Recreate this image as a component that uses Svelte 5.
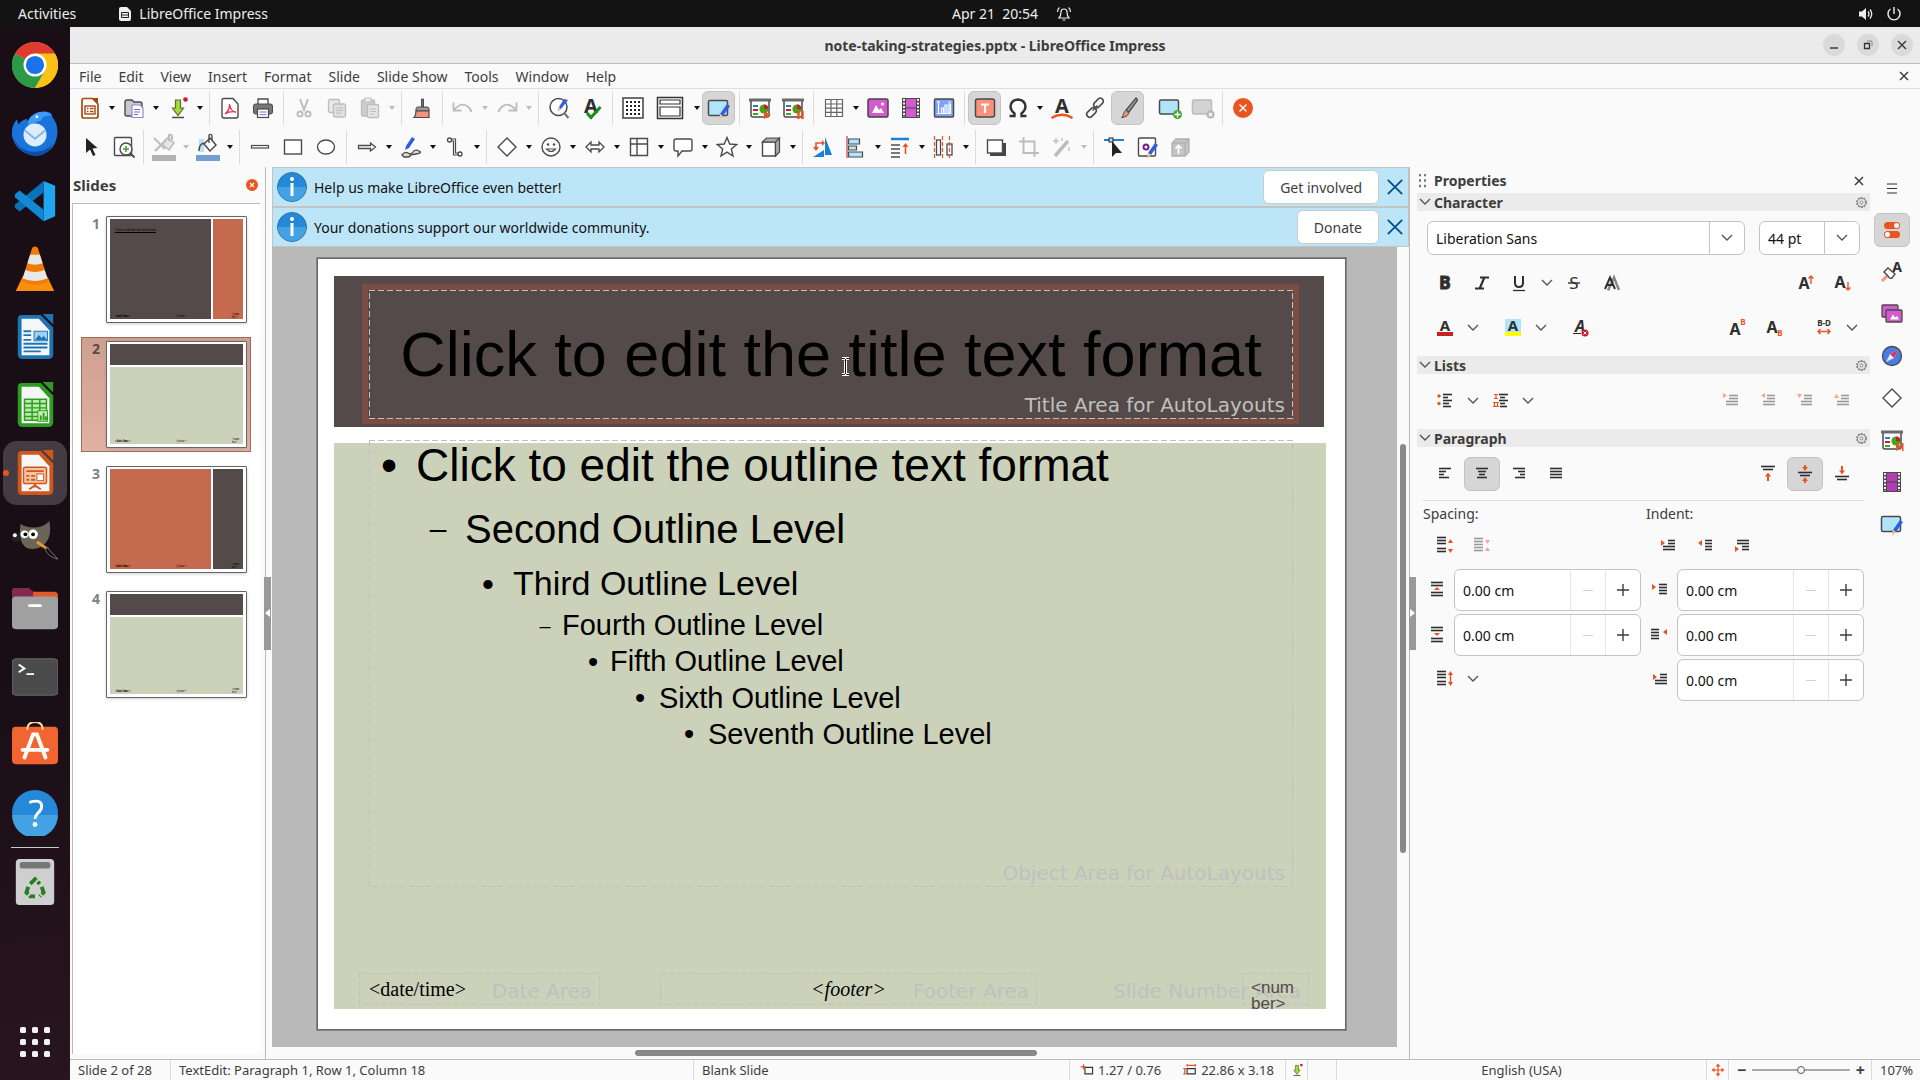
<script>
    const g = '#4a4a4a';
    const o = '#e95420';
    const off = '#bdbdbd';

    function lines(rows, color = '#2e2e2e') {
        return rows.map(([x, y, w]) => `<path d="M${x} ${y}.5h${w}" stroke="${color}" stroke-width="1.6" fill="none"/>`).join('');
    }

    function letter(ch, x, y, size, extra = '') {
        return `<text x="${x}" y="${y}" font-family="Noto Sans" font-weight="700" font-size="${size}" text-anchor="middle" fill="#2e2e2e" ${extra}>${ch}</text>`;
    }

    const screen = `<path d="M3 5v14q0 2 2 2h14q2 0 2-2V5" fill="#fff" stroke="${g}" stroke-width="1.5"/><path d="M1 4h22" stroke="#6b6b6b" stroke-width="3"/><path d="M5 10h5" stroke="#1b7fd4" stroke-width="2"/><path d="M5 14h5" stroke="#d2172f" stroke-width="2"/><path d="M5 18h5" stroke="#43a616" stroke-width="2"/><circle cx="16" cy="13" r="4.6" fill="#43a616"/><path d="M16 13V8.400a4.600 4.600 0 0 1 4.600 4.600z" fill="#d2172f"/>`;
    const film = (c) => `<rect x="3" y="2" width="18" height="20" fill="#4a4a4a"/><rect x="7" y="3" width="10" height="8.500" fill="${c}"/><rect x="7" y="12.500" width="10" height="8.500" fill="${c}"/><path d="M5 3v18M19 3v18" stroke="#fff" stroke-width="1.800" stroke-dasharray="2 1.500"/>`;
    const pencil = '<path d="M20 8l3 2-7 10-3-2z" fill="#2e5fe0"/><path d="M13 18l3 2-4 4z" fill="#f6c083"/>';
    const download = '<path d="M9.500 4h5v8h3L12 19.500 6.500 12h3z" fill="#a6d840" stroke="#56702a" stroke-width="1.200"/><path d="M6 21.500h12" stroke="#4a4a4a" stroke-width="1.500"/><circle cx="19.500" cy="3.500" r="2.300" fill="#d2172f"/>';
    const brushA = '<path d="M20 2q2 1 1 3l-8 11-3-2z" fill="#9a9a9a" stroke="#4a4a4a" stroke-width="1.300"/><path d="M9.500 14.500q3 0 3 3-1 3.500-7 4 2-1 2-4 .5-2 2-3z" fill="#f58f7a" stroke="#4a4a4a"/>';
    const master = '<rect x="1.500" y="4.500" width="19" height="15" rx="1.500" fill="#b0e4f8" stroke="#4a4a4a" stroke-width="1.500"/>' + pencil;

    const icons = {
        newdoc: `<path d="M6 2.500h8.500L20 8v12q0 2-2 2H6q-2 0-2-2V4.500q0-2 2-2z" fill="#fff" stroke="#a5480f" stroke-width="1.700"/><path d="M14 2h6v6z" fill="#a5480f"/><rect x="7" y="10" width="10" height="8" fill="none" stroke="#a5480f" stroke-width="1.400"/><path d="M9 12.500h1.500M12 12.500h3.500M9 15.500h1.500M12 15.500h3.500" stroke="#a5480f" stroke-width="1.400"/>`,
        open: `<path d="M3 19V6q0-2 2-2h5l2 2h6q2 0 2 2v12H5q-2 0-2-2z" fill="#c9c9c9" stroke="${g}" stroke-width="1.400"/><path d="M10 9h8l3 3v9.500H10z" fill="#fff" stroke="#8d8dd8" stroke-width="1.200"/><path d="M12 13.500h6M12 16h6M12 18.500h4" stroke="#6e6ed8"/>`,
        save: download,
        pdf: `<path d="M6 2.500h9L20 8v12q0 2-2 2H6q-2 0-2-2V4.500q0-2 2-2z" fill="#fff" stroke="${g}" stroke-width="1.400"/><path d="M7 18q5-4 4.500-10c1 6 3 8 6.500 8-5-1-8 0-11 2z" fill="none" stroke="#e2304a" stroke-width="1.300"/>`,
        print: `<path d="M7 8V3h10v5" fill="#fff" stroke="${g}" stroke-width="1.300"/><rect x="2.500" y="8" width="19" height="10" rx="2" fill="#777" stroke="${g}"/><rect x="6.500" y="13" width="11" height="8.500" fill="#fff" stroke="${g}" stroke-width="1.200"/><path d="M8.500 16h7M8.500 18.700h7" stroke="#6e6ed8"/>`,
        cut: `<path d="M8 3l4.500 12M16 3l-4.500 12" stroke="${off}" stroke-width="2" fill="none"/><circle cx="8" cy="18" r="2.500" fill="none" stroke="${off}" stroke-width="2"/><circle cx="16" cy="18" r="2.500" fill="none" stroke="${off}" stroke-width="2"/>`,
        copy: `<rect x="3.500" y="3.500" width="11" height="13" rx="1.500" fill="#e8e8e8" stroke="${off}" stroke-width="1.300"/><rect x="8.500" y="8" width="12" height="13" rx="1.500" fill="#e0e0e0" stroke="${off}" stroke-width="1.300"/><path d="M11 12h7M11 14.500h7M11 17h5" stroke="${off}"/>`,
        paste: `<rect x="3.500" y="4" width="13" height="16" rx="1.500" fill="#ccc" stroke="${off}" stroke-width="1.300"/><rect x="7" y="2" width="6" height="4" fill="#eee" stroke="${off}"/><rect x="9.500" y="8.500" width="11" height="13" rx="1" fill="#e6e6e6" stroke="${off}" stroke-width="1.300"/><path d="M12 13h6M12 15.500h6M12 18h4" stroke="${off}"/>`,
        clone: `<path d="M11.500 3h2v8h-2z" fill="#777" stroke="${g}"/><path d="M6 15v-2q0-2 2-2h9q2 0 2 2v2z" fill="#999" stroke="${g}"/><path d="M6 15h13v6.500H4q2-2 2-6.500z" fill="#f9917c" stroke="${g}" stroke-width="1.200"/>`,
        undo: `<path d="M2.500 6.500v8h8M3 14q7-8 13-4 4 3 4.500 6" fill="none" stroke="${off}" stroke-width="1.800"/>`,
        redo: `<path d="M21.500 6.500v8h-8M21 14q-7-8-13-4-4 3-4.500 6" fill="none" stroke="${off}" stroke-width="1.800"/>`,
        find: `<circle cx="11.500" cy="11" r="8.500" fill="#fff" stroke="${g}" stroke-width="1.500"/><path d="M17 17l4.500 5" stroke="#777" stroke-width="2.200"/><path d="M17 3l4 1-7 9-3 2 1-4z" fill="#2e5fe0"/><path d="M12 11l2 2-3 2.500z" fill="#f6c083"/>`,
        spell: letter('A', 11, 17, 20) + '<path d="M7 17l4 4.500L20.500 11" fill="none" stroke="#168c1c" stroke-width="3"/>',
        grid: '<rect x="2" y="2" width="20" height="20" fill="#fff" stroke="#333" stroke-width="1.400"/>' + [6, 10, 14, 18].map((y) => `<path d="M5 ${y}h15" stroke="#222" stroke-width="1.800" stroke-dasharray="2 2"/>`).join(''),
        views: `<path d="M-.500 1.500h25v21h-25z" fill="#fff" stroke="#333" stroke-width="1.500"/><path d="M2 4h20v4H2zM2 11h20v9H2z" fill="#fff" stroke="#333" stroke-width="1.200"/>`,
        master,
        showfirst: screen + `<path d="M16 15l7 4-7 4z" fill="${o}"/>`,
        showcur: screen + `<path d="M17.500 15v8M21.500 15v8" stroke="${o}" stroke-width="2.400"/>`,
        table: `<path d="M3.500 3.500h17v17h-17zM3.500 8h17M3.500 12.200h17M3.500 16.400h17M9 3.500v17M14.800 3.500v17" fill="#fff" stroke="#666" stroke-width="1.200"/>`,
        image: '<rect x="2" y="3" width="20" height="18" rx="1.500" fill="#d45bcf" stroke="#444" stroke-width="1.500"/><path d="M6 17l4-8 3 5 2-2 3 5z" fill="#fff"/><circle cx="16.500" cy="8" r="1.500" fill="#fff"/>',
        av: film('#d45bcf'),
        chart: '<rect x="2.500" y="3" width="19" height="18" rx="1" fill="#7da4f8" stroke="#4a4a4a" stroke-width="1.500"/><path d="M5 6h3M6.500 5v13M5 17.500h14M16 6h3M9.500 17v-5h2v5M13 17v-8h2v8M17 17V8h1.500v9" fill="none" stroke="#fff" stroke-width="1.200"/>',
        textbox: '<rect x="2.500" y="3" width="19" height="18" rx="2" fill="#f9917c" stroke="#4a4a4a" stroke-width="1.500"/><path d="M8 8.500h8M12 8.500V17" stroke="#fff" stroke-width="2.200" fill="none"/>',
        omega: '<path d="M3.500 20h5v-2.500Q4.500 14 4.500 10.500 5 4 12 3.500q7 .5 7.500 7 0 3.500-4 7V20h5" fill="none" stroke="#333" stroke-width="2.400"/>',
        fontwork: letter('A', 12, 17, 20) + `<path d="M1.500 22q10.500-6.500 21 0" fill="none" stroke="${o}" stroke-width="2.400"/>`,
        link: `<rect x="10" y="4" width="11" height="6" rx="3" transform="rotate(-45 15.500 7)" fill="none" stroke="${g}" stroke-width="1.500"/><rect x="3" y="13.500" width="11" height="6" rx="3" transform="rotate(-45 8.500 16.500)" fill="none" stroke="${g}" stroke-width="1.500"/><path d="M9.500 14.500l5-5" stroke="${g}" stroke-width="1.500"/>`,
        brush: brushA,
        newslide: '<rect x="2.500" y="4" width="19" height="14" rx="1.500" fill="#b0e4f8" stroke="#4a4a4a" stroke-width="1.500"/><circle cx="20.500" cy="18.500" r="4.500" fill="#43a62b"/><path d="M20.500 15.500v6M17.500 18.500h6" stroke="#fff" stroke-width="1.400"/>',
        delslide: '<rect x="2.500" y="4" width="19" height="14" rx="1.500" fill="#d3d3d3" stroke="#bbb" stroke-width="1.500"/><circle cx="20.500" cy="18.500" r="4" fill="#b5b5b5"/><path d="M19 17l3 3M22 17l-3 3" stroke="#fff" stroke-width="1.200"/>',
        closedoc: `<circle cx="12" cy="12" r="10" fill="${o}"/><path d="M8.500 8.500l7 7M15.500 8.500l-7 7" stroke="#fff" stroke-width="1.400"/>`,
        pointer: '<path d="M8 3v15l4-3.500 3 6.500 2.500-1-3-6.500 5-.5z" fill="#222"/>',
        zoom: `<rect x="3.500" y="2.500" width="17" height="18" rx="1" fill="#fff" stroke="${g}" stroke-width="1.400"/><circle cx="15" cy="14" r="6" fill="#fff" stroke="${g}" stroke-width="1.400"/><path d="M19.500 18.500l4 4" stroke="${g}" stroke-width="2"/><path d="M15 11v6M12 14h6" stroke="#43a62b" stroke-width="1.600"/>`,
        linecolor: `<path d="M2 3l11 11" stroke="${off}" stroke-width="2"/><path d="M10 9l5-6 7 5-5 7z" fill="#e6e6e6" stroke="${off}" stroke-width="1.500"/><path d="M17 6V0q3-1 3 2v3M3 16L14 5" stroke="${off}" stroke-width="2.200" fill="none"/><path d="M0 23h24" stroke="#b3b3b3" stroke-width="6"/>`,
        fillcolor: `<path d="M3 4h5v13H3z" fill="#b0e4f8"/><path d="M8 9l6-6 6 7-6 6z" fill="#fff" stroke="${g}" stroke-width="1.500"/><path d="M13 8V0q3-2 3 2v3M3 16q0-7 5-8" stroke="${g}" stroke-width="1.400" fill="none"/><path d="M0 23h24" stroke="#729fcf" stroke-width="6"/>`,
        line: `<rect x="3.500" y="10.500" width="17" height="2.500" fill="#fff" stroke="${g}" stroke-width="1.200"/>`,
        rect: `<rect x="3.500" y="5" width="17" height="14" fill="#fff" stroke="${g}" stroke-width="1.400"/>`,
        ellipse: `<ellipse cx="12" cy="12" rx="8.500" ry="7" fill="#fff" stroke="${g}" stroke-width="1.400"/>`,
        arrow: `<path d="M3.500 10.500h12V8l5 4-5 4v-2.500h-12z" fill="#fff" stroke="${g}" stroke-width="1.300"/>`,
        curve: `<path d="M13 2l3 2-6 9-4 2 1-4z" fill="#2e5fe0"/><path d="M3 20q3-4 6-2t5-1 6-1-3 3-6 2-6 1z" fill="#ddd" stroke="${g}" stroke-width="1.300"/>`,
        connector: `<circle cx="6.500" cy="5" r="2" fill="#fff" stroke="${g}" stroke-width="1.300"/><circle cx="17" cy="19" r="2" fill="#fff" stroke="${g}" stroke-width="1.300"/><path d="M8.500 4h4v14H15M8.500 6h2v14H15" fill="none" stroke="${g}" stroke-width="1.200"/>`,
        diamond: `<path d="M12 3l9 9-9 9-9-9z" fill="#fff" stroke="${g}" stroke-width="1.400"/>`,
        smiley: `<circle cx="12" cy="12" r="9" fill="#fff" stroke="${g}" stroke-width="1.400"/><circle cx="9" cy="9.500" r="1.200" fill="${g}"/><circle cx="15" cy="9.500" r="1.200" fill="${g}"/><path d="M7.500 14q4.500 5 9 0z" fill="#fff" stroke="${g}" stroke-width="1.200"/>`,
        arrows: `<path d="M3 12l5-5v3h8V7l5 5-5 5v-3H8v3z" fill="#fff" stroke="${g}" stroke-width="1.300"/>`,
        flow: `<path d="M3.500 3.500h17v17h-17zM3.500 9h17M10 3.500v17" fill="#fff" stroke="${g}" stroke-width="1.400"/>`,
        callout: `<path d="M5 4h14q2 0 2 2v8q0 2-2 2h-8l-4 5v-5H5q-2 0-2-2V6q0-2 2-2z" fill="#fff" stroke="${g}" stroke-width="1.400"/>`,
        star: `<path d="M12 2.500l2.700 6.500 7 .5-5.400 4.500 1.700 7-6-3.800-6 3.800 1.700-7L2.300 9.500l7-.5z" fill="#fff" stroke="${g}" stroke-width="1.400"/>`,
        cube: `<path d="M3.500 7h13v14h-13z" fill="#fff" stroke="${g}" stroke-width="1.400"/><path d="M3.500 7l4-4h13l-4 4zM16.500 7l4-4v14l-4 4z" fill="#aaa" stroke="${g}" stroke-width="1.200"/>`,
        rotate: `<path d="M14 2l7 18h-7zM2 22l11-7v7z" fill="#1b7fd4"/><path d="M5 15V8h7" fill="none" stroke="${o}" stroke-width="1.600"/><path d="M11 5l3 3-3 3M2 12l3 4 3-4z" fill="${o}"/>`,
        align: `<path d="M3 1v22" stroke="#d2172f"/><path d="M4.500 4h11v5h-11zM4.500 11h8v4h-8zM4.500 17h14v5h-14z" fill="#b0e4f8" stroke="${g}" stroke-width="1.200"/>`,
        arrange: `<path d="M3 4h18" stroke="#1b7fd4" stroke-width="2.500"/><path d="M3 10h9M3 14h9M3 18h9M3 22h9" stroke="#777" stroke-width="2"/><path d="M17.500 19v-9" stroke="${o}" stroke-width="1.600"/><path d="M14.500 12l3-4 3 4z" fill="${o}"/>`,
        distribute: `<rect x="4.500" y="5" width="4" height="15" fill="#fff" stroke="${g}" stroke-width="1.300"/><rect x="15" y="9" width="5" height="11" fill="#fff" stroke="${g}" stroke-width="1.300"/><path d="M2.500 1v22M10.500 1v22M17.500 1v22" stroke="${o}" stroke-width="1.200" stroke-dasharray="4 2"/>`,
        shadow: `<path d="M6 8h16v13H6z" fill="#444"/><rect x="3.500" y="5" width="15" height="13" fill="#fff" stroke="${g}" stroke-width="1.400"/>`,
        crop: `<path d="M6.500 2v16H22M2 6.500h15.500V22" fill="none" stroke="${off}" stroke-width="2"/>`,
        filter: `<path d="M5 21L18 6" stroke="${off}" stroke-width="3.500"/><path d="M6 3v6M3 6h6M12 3v3M19 12v4" stroke="${off}" stroke-width="1.300"/>`,
        points: '<path d="M2 5h20" stroke="#1b7fd4" stroke-width="2"/><rect x="7" y="3" width="4" height="4" fill="#b0e4f8" stroke="#222"/><path d="M10 6v16l4-4h6z" fill="#222"/>',
        glue: `<rect x="3.500" y="3" width="17" height="18" rx="1" fill="#fff" stroke="${g}" stroke-width="1.400"/><circle cx="11" cy="12" r="2.500" fill="none" stroke="#7b1e8c" stroke-width="2"/>` + pencil,
        extrude: `<path d="M4 8l4-4h13v13l-4 4H4z" fill="#c4c4c4" stroke="#b0b0b0" stroke-width="1.300"/><path d="M4 8h13v13M17 8l4-4" stroke="#aaa" fill="none"/><path d="M10.500 19v-8M7.500 13.500l3-3 3 3" stroke="#fff" stroke-width="1.700" fill="none"/>`,
        bold: letter('B', 12, 18, 17, 'stroke="#2e2e2e" stroke-width="1"'),
        italic: '<path d="M10 6.500h9M5 17.500h9M14.500 6l-5 12" stroke="#2e2e2e" stroke-width="2.200" fill="none"/>',
        underline: '<path d="M8 5v7q0 4 4 4t4-4V5" fill="none" stroke="#2e2e2e" stroke-width="2"/><path d="M6 19.500h12" stroke="#2e2e2e" stroke-width="1.300"/>',
        strike: `<text x="12" y="18" font-family="Noto Sans" font-size="17" text-anchor="middle" fill="#2e2e2e">S</text><path d="M6 12h12" stroke="#2e2e2e" stroke-width="1.400"/>`,
        shadowA: '<path d="M9 19.500l6-13 5 12.500" stroke="#888" stroke-width="2.500" fill="none"/>' + '<path d="M6 18l5-11.500L16 18M8 14h6" fill="none" stroke="#2e2e2e" stroke-width="2"/>',
        grow: letter('A', 11, 18, 16) + `<path d="M18 13V5M15.500 7.500L18 5l2.500 2.500" stroke="${o}" stroke-width="1.400" fill="none"/>`,
        shrink: letter('A', 10, 17, 16) + `<path d="M18 11v8M15.500 16.500L18 19l2.500-2.500" stroke="${o}" stroke-width="1.400" fill="none"/>`,
        fontcolor: letter('A', 12, 15, 15) + '<path d="M4 18h16" stroke="#c9211e" stroke-width="4"/>',
        highlight: '<rect x="4" y="3" width="16" height="14" fill="#b0e4f8"/>' + letter('A', 12, 15, 15) + '<path d="M4 18h16" stroke="#ff0" stroke-width="4"/>',
        clear: letter('A', 11, 16, 16, 'font-style="italic"') + '<path d="M4 17.500h8" stroke="#2e2e2e"/><circle cx="16" cy="17" r="3.500" fill="#d2172f"/><path d="M14.500 15.500l3 3M17.500 15.500l-3 3" stroke="#fff"/>',
        sup: letter('A', 10, 19, 16) + `<text x="18" y="9" font-family="Noto Sans" font-weight="700" font-size="8" text-anchor="middle" fill="${o}">B</text>`,
        sub: letter('A', 10, 17, 16) + `<text x="18" y="20" font-family="Noto Sans" font-weight="700" font-size="8" text-anchor="middle" fill="${o}">B</text>`,
        spacing: letter('B-D', 12, 10, 8) + `<path d="M6 15.500h12M8.500 13L6 15.500 8.500 18M15.500 13l2.500 2.500-2.500 2.500" stroke="${o}" stroke-width="1.400" fill="none"/>`,
        bullets: `<circle cx="6" cy="7" r="1.700" fill="${o}"/><circle cx="6" cy="14.500" r="1.700" fill="${o}"/>` + lines([[10, 5, 9], [10, 8, 5], [10, 11, 9], [10, 14, 6], [10, 17, 8]]),
        numbers: `<path d="M6 5.500h4M8 5.500v4M6 9.500h4M5 13.500h6M6.500 13.500v4M9.500 13.500v4M5 17.500h6" stroke="${o}" stroke-width="1.200"/>` + lines([[11, 5, 9], [12, 8, 5], [11, 11, 9], [12, 14, 5], [12, 17, 7]]),
        demote: `<path d="M4 4l4 2.500L4 9z" fill="#f4a78f"/>` + lines([[10, 6, 9], [10, 9, 9], [7, 12, 12], [7, 15, 12]], '#999'),
        promote: `<path d="M9 4L5 6.500 9 9z" fill="#f4a78f"/>` + lines([[11, 6, 8], [11, 9, 8], [7, 12, 12], [7, 15, 12]], '#999'),
        movedown: `<path d="M4 5h5L6.500 9z" fill="#f4a78f"/>` + lines([[11, 6, 8], [11, 9, 8], [8, 12, 11], [8, 15, 11]], '#999'),
        moveup: `<path d="M4 9h5L6.500 5z" fill="#f4a78f"/>` + lines([[11, 6, 8], [11, 9, 8], [7, 12, 12], [7, 15, 12]], '#999'),
        left: lines([[6, 6, 12], [6, 9, 7], [6, 12, 5], [6, 15, 10]]),
        center: lines([[6, 6, 12], [8, 9, 8], [9, 12, 6], [7, 15, 10]]),
        right: lines([[6, 6, 12], [11, 9, 7], [13, 12, 5], [8, 15, 10]]),
        justify: lines([[6, 6, 12], [6, 9, 12], [6, 12, 12], [6, 15, 12]]),
        top: lines([[5, 4, 14], [7, 7, 10]]) + `<path d="M12 19v-6" stroke="${o}" stroke-width="2"/><path d="M9 14.500l3-4 3 4z" fill="${o}"/>`,
        middle: lines([[5, 10, 14], [7, 13, 10]]) + `<path d="M12 3v3M12 18v3" stroke="${o}" stroke-width="2"/><path d="M9 5l3 4 3-4zM9 19l3-4 3 4z" fill="${o}"/>`,
        bottom: lines([[5, 14, 14], [7, 17, 10]]) + `<path d="M12 4v6" stroke="${o}" stroke-width="2"/><path d="M9 8.500l3 4 3-4z" fill="${o}"/>`,
        spcup: lines([[4, 3, 9], [4, 6, 9], [4, 9, 9], [4, 14, 9], [4, 17, 9]]) + `<path d="M15 9h5l-2.500-4zM15 15h5l-2.500 4z" fill="${o}"/>`,
        spcdown: lines([[4, 4, 9], [4, 7, 9], [4, 10, 9], [4, 13, 9], [4, 16, 9]], '#999') + '<path d="M15 6h5l-2.500 4zM15 17h5l-2.500-4z" fill="#f4a78f"/>',
        indmore: lines([[12, 6, 7], [12, 9, 7], [7, 12, 12], [7, 15, 12]]) + `<path d="M5 6l4 3-4 3z" fill="${o}"/>`,
        indless: lines([[12, 6, 7], [12, 9, 7], [12, 12, 7], [12, 15, 7]]) + `<path d="M9 6L5 9l4 3z" fill="${o}"/>`,
        indhang: lines([[7, 6, 12], [7, 9, 12], [12, 12, 7], [12, 15, 7]]) + `<path d="M5 12l4 3-4 3z" fill="${o}"/>`,
        above: lines([[6, 4, 12], [6, 7, 12], [6, 14, 12], [6, 17, 12]]) + `<path d="M9 12h6l-3-3z" fill="${o}"/>`,
        below: lines([[6, 4, 12], [6, 7, 12], [6, 15, 12], [6, 18, 12]]) + `<path d="M9 10h6l-3 3z" fill="${o}"/>`,
        before: lines([[11, 6, 8], [11, 9, 8], [11, 12, 8], [11, 15, 8]]) + `<path d="M4 6l4 3-4 3z" fill="${o}"/>`,
        after: lines([[3, 6, 8], [3, 9, 8], [3, 12, 8], [3, 15, 8]]) + `<path d="M19 6l-4 3 4 3z" fill="${o}"/>`,
        linespc: lines([[4, 4, 9], [4, 7, 9], [4, 10, 9], [4, 14, 9], [4, 17, 9]]) + `<path d="M17.500 6v11" stroke="${o}" stroke-width="1.500"/><path d="M15 8h5l-2.500-4zM15 15h5l-2.500 4z" fill="${o}"/>`,
        gear: '<circle cx="12" cy="12" r="9" fill="none" stroke="#777" stroke-width="2" stroke-dasharray="3.500 2.200"/><circle cx="12" cy="12" r="7.500" fill="#e2e2e2" stroke="#777" stroke-width="1.500"/><circle cx="12" cy="12" r="2.500" fill="#fafafa" stroke="#777" stroke-width="1.500"/>',
        burger: '<path d="M7 8h10M7 12.500h10M7 17h10" stroke="#2e2e2e" stroke-width="1.200"/>',
        props: `<rect x="4" y="4" width="16" height="7" rx="3.500" fill="${o}"/><rect x="4" y="13" width="16" height="7" rx="3.500" fill="${o}"/><circle cx="16.500" cy="7.500" r="2.500" fill="#fff"/><circle cx="7.500" cy="16.500" r="2.500" fill="#fff"/>`,
        styles: letter('A', 17, 12, 14) + '<path d="M2 21l5-5" stroke="#f9917c" stroke-width="3"/><path d="M4 12l4-4 7 6-3 4q-3 1-4-2z" fill="#fff" stroke="#4a4a4a" stroke-width="1.400"/>',
        gallery: '<rect x="2" y="3" width="16" height="12" rx="1" fill="#d45bcf" stroke="#4a4a4a" stroke-width="1.300"/><rect x="6" y="8" width="16" height="12" rx="1" fill="#d45bcf" stroke="#4a4a4a" stroke-width="1.300"/><path d="M10 17.500l3-5 2 3 2-1.500 2 3.500z" fill="#fff"/>',
        compass: '<circle cx="12" cy="12" r="9.500" fill="#4a7be8" stroke="#4a4a4a" stroke-width="1.300"/><path d="M18 6l-4 8-8 4 4-8z" fill="#e8e8f4"/><path d="M18 6l-4 8-4-4z" fill="#d9364a"/>',
        transition: screen + `<path d="M16 15l6 4-6 4zM22 15h1.500v8H22z" fill="${o}"/>`,
        film: film('#b23cb4'),
        pos: `<path d="M8.500 7.500h13v11h-13z" fill="none" stroke="#333" stroke-width="2"/><path d="M6 2v9M1 6.500h9" stroke="${o}" stroke-width="2"/>`,
        size: `<path d="M7 9.500h14v9H7z" fill="none" stroke="#333" stroke-width="2"/><path d="M7 4h14M7 1.500v5M21 1.500v5M3 9.500v9M.500 9.500h5M.500 18.500h5" stroke="${o}" stroke-width="2"/>`,
        fit: `<path d="M12 3v18M3 12h18" stroke="${o}" stroke-width="2"/><path d="M8 6l4-5 4 5zM8 18l4 5 4-5zM6 8l-5 4 5 4zM18 8l5 4-5 4z" fill="${o}"/>`
    };

    const standardBar = [
        'newdoc+', 'open+', 'save+', '|', 'pdf', 'print', '|', 'cut', 'copy', 'paste-', '|', 'clone', '|', 'undo-', 'redo-', '|',
        'find', 'spell', '|', 'grid', 'views+', 'master!', '|', 'showfirst', 'showcur', '|', 'table+', 'image', 'av', 'chart', '|',
        'textbox!', 'omega+', 'fontwork', 'link', 'brush!', ' ', 'newslide', 'delslide', '|', 'closedoc'
    ];
    const drawingBar = [
        'pointer', 'zoom', '|', 'linecolor-', 'fillcolor+', '|', 'line', 'rect', 'ellipse', '|', 'arrow+', 'curve+', 'connector+', '|',
        'diamond+', 'smiley+', 'arrows+', 'flow+', 'callout+', 'star+', 'cube+', '|', 'rotate', 'align+', 'arrange+', 'distribute+', '|',
        'shadow', 'crop', 'filter-', '|', 'points', 'glue', 'extrude'
    ];

    const menus = ['File', 'Edit', 'View', 'Insert', 'Format', 'Slide', 'Slide Show', 'Tools', 'Window', 'Help'];
    const slides = ['title', 'content', 'title alt', 'content'];
    const levels = [
        {text: 'Click to edit the outline text format', size: 46, mark: '•', markSize: 46, gap: 0, slot: 54},
        {text: 'Second Outline Level', size: 40, mark: '–', markSize: 30, gap: 18, slot: 54},
        {text: 'Third Outline Level', size: 34, mark: '•', markSize: 34, gap: 12, slot: 50},
        {text: 'Fourth Outline Level', size: 29, mark: '–', markSize: 20, gap: 6, slot: 34},
        {text: 'Fifth Outline Level', size: 29, mark: '•', markSize: 29, gap: 3, slot: 34},
        {text: 'Sixth Outline Level', size: 29, mark: '•', markSize: 29, gap: 3, slot: 38},
        {text: 'Seventh Outline Level', size: 29, mark: '•', markSize: 29, gap: 3, slot: 38}
    ];
    const infobars = [
        {text: 'Help us make LibreOffice even better!', action: 'Get involved'},
        {text: 'Your donations support our worldwide community.', action: 'Donate'}
    ];
    const tabs = ['props', 'styles', 'gallery', 'compass', 'diamond', 'transition', 'film', 'master'];

    let activeTab = $state('props');
    let selected = $state(1);
    let zoom = $state(50);
</script>

{#snippet icon(name, size = 24)}
    <svg width={size} height={size} viewBox="0 0 24 24" overflow="visible">{@html icons[name]}</svg>
{/snippet}

{#snippet cross(size = 10)}
    <svg width={size} height={size} viewBox="0 0 10 10"><path d="M1 1l8 8M9 1l-8 8" stroke="currentColor" stroke-width={size > 10 ? 1 : 1.5} /></svg>
{/snippet}

{#snippet chevron()}
    <svg width="12" height="8" viewBox="0 0 12 8"><path d="M1 1l5 5 5-5" fill="none" stroke="#555" stroke-width="1.4" /></svg>
{/snippet}

{#snippet toolbar(items, label)}
    <div class="toolbar" role="toolbar" aria-label={label}>
        {#each items as item}
            {@const name = item.replace(/[+!-]$/, '')}
            {#if item === '|' || item === ' '}
                <i class="sep" class:blank={item === ' '}></i>
            {:else}
                <button class="tool" class:wide={name === 'views'} class:pressed={item.endsWith('!')} aria-label={name}>{@render icon(name)}</button>
                {#if /[+-]$/.test(item)}
                    <button class="caret" class:off={item.endsWith('-')} aria-label="{name} options"></button>
                {/if}
            {/if}
        {/each}
    </div>
{/snippet}

{#snippet tool(name, opts = {})}
    <button class="side-tool" class:pressed={opts.pressed} aria-label={name}>{@render icon(name)}</button>
    {#if opts.menu}
        <button class="side-caret" aria-label="{name} options">{@render chevron()}</button>
    {/if}
{/snippet}

{#snippet heading(title)}
    <h3>{@render chevron()}<span>{title}</span>{@render icon('gear', 13)}</h3>
{/snippet}

{#snippet spin(id, name, label)}
    <div class="field">
        <label for={id}>{@render icon(name)}</label>
        <div class="spin">
            <input {id} value="0.00 cm" aria-label={label} />
            <button aria-label="Decrease"><svg width="10" height="10"><path d="M0 5.5h10" stroke="#d0d0d0" /></svg></button>
            <button aria-label="Increase"><svg width="12" height="12"><path d="M0 6h12M6 0v12" stroke="#3d3d3d" stroke-width="1.4" /></svg></button>
        </div>
    </div>
{/snippet}

{#snippet dashes()}
    <svg class="dashes"><rect width="100%" height="100%" fill="none" stroke="#c0c0c0" stroke-width="2" stroke-dasharray="6 3" /></svg>
{/snippet}

<div class="desktop">
    <header class="topbar">
        <div class="top-left">
            <button>Activities</button>
            <button class="app">
                <svg width="14" height="16" viewBox="0 0 14 16"><path d="M3 1h6l4 4v8q0 2-2 2H3q-2 0-2-2V3q0-2 2-2z" fill="#f0f0f0" /><path d="M3.500 6.500h7v5h-7zM3.500 9h7" fill="none" stroke="#222" /></svg>
                LibreOffice Impress
            </button>
        </div>
        <button class="clock">Apr 21&nbsp; 20:54</button>
        <div class="top-right">
            <svg class="bell" width="16" height="16" viewBox="0 0 16 16"><path d="M3 12q2-2 2-6 0-3 3-3t3 3q0 4 2 6zM6.500 14h3M1.500 6q0-3 2-4.500M14.500 6q0-3-2-4.500" fill="none" stroke="#eee" stroke-width="1.2" /></svg>
            <svg width="16" height="16" viewBox="0 0 16 16"><path d="M1 5.500h3L8 2v12l-4-3.500H1z" fill="#eee" /><path d="M10 5.500q2 2.500 0 5M12 3.500q3.500 4.500 0 9" fill="none" stroke="#eee" stroke-width="1.300" /></svg>
            <svg width="16" height="16" viewBox="0 0 16 16"><path d="M8 1v7M4.500 3a6 6 0 1 0 7 0" fill="none" stroke="#eee" stroke-width="1.400" /></svg>
        </div>
    </header>

    <div class="below">
        <nav class="dock" aria-label="Dock">
            <button aria-label="Chrome"><svg viewBox="0 0 48 48"><circle cx="24" cy="24" r="24" fill="#fbc116" /><path d="M24 24L3.200 12A24 24 0 0 1 44.800 12z" fill="#e03b30" /><path d="M24 24L3.200 12A24 24 0 0 0 24 48l10.400-18z" fill="#2a9a48" /><path d="M24 12h20.800A24 24 0 0 1 24 48l10.400-18z" fill="#fbc116" /><circle cx="24" cy="24" r="12" fill="#fff" /><circle cx="24" cy="24" r="9.500" fill="#1a73e8" /></svg></button>
            <button aria-label="Thunderbird"><svg viewBox="0 0 48 48"><path d="M17 11Q22 0 38 2q4 1 4 5 7 9 5 20-3 18-21 20Q5 47 0 27q-1-10 5-17l2 5q3-5 9-6-1 3 1 2z" fill="#1b74dc" /><path d="M17 11Q23 1 36 2l6 4q-10-1-12 5-9 2-14 8 1-5 1-8z" fill="#3f9df5" /><path d="M1 25q3 15 17 18 15 3 25-8-6 14-20 13Q4 45 1 25z" fill="#0d4fa8" /><circle cx="24" cy="26" r="12" fill="#dceefc" /><path d="M13 21l11 9 11-9" fill="none" stroke="#7fb2ea" stroke-width="2" /><circle cx="26" cy="7" r="1.500" fill="#fff" /></svg></button>
            <button aria-label="Visual Studio Code"><svg viewBox="0 0 48 48"><path d="M33 3l12 5v32l-12 5z" fill="#23a4f0" /><path d="M33 3v12L8 35l-5-4v-3z" fill="#0b71b9" /><path d="M33 45V33L8 13l-5 4v3z" fill="#1389d6" /></svg></button>
            <button aria-label="VLC"><svg viewBox="0 0 48 48"><path d="M11 32h26l7 15H4z" fill="#f78f0c" /><path d="M21 2q3-3 6 0l11 35q-14 7-28 0z" fill="#f07c0a" /><path d="M19 9h10l3 9q-8 3-16 0zM14 25q10 4 20 0l3 9q-13 5-26 0z" fill="#e8e8e8" /></svg></button>
            {#each [['Writer', '#1c74b4'], ['Calc', '#2d9c20'], ['Impress', '#d0561c']] as [app, color]}
                <button class:running={app === 'Impress'} aria-label={app}>
                    <svg viewBox="0 0 48 48">
                        <path d="M10 1h20l13 13v28q0 5-5 5H11q-5 0-5-5V5q0-4 4-4z" fill={color} />
                        <path d="M10 5h18l11 12v26H10z" fill="#f6f6f6" /><path d="M32 0h11v11z" fill={color} />
                        {#if app === 'Writer'}
                            <path d="M12 18h8M12 22h8M12 27h8M12 31h25M12 35h25M12 39h18" stroke={color} stroke-width="2" /><rect x="23" y="18" width="14" height="10" fill="#9fd0f2" stroke={color} /><path d="M24 27l4-5 3 3 2-2 4 4z" fill={color} />
                        {:else if app === 'Calc'}
                            <path d="M13 18h23v22H13zM13 22.500h23M13 27h23M13 31.500h23M13 36h23M21 18v22M29 18v22" fill="#b8eca8" stroke={color} stroke-width="1.500" /><rect x="27" y="30" width="10" height="11" fill="#c8f0bc" stroke={color} /><path d="M30 40v-5M33 40v-8M35.500 40v-4" stroke={color} stroke-width="2" />
                        {:else}
                            <rect x="12" y="18" width="24" height="17" rx="2" fill="#f3c4a8" stroke={color} stroke-width="1.500" /><path d="M15 22h18M15 27h3M15 31h3M20 27h4M20 31h4M24 35v4M18 41l6-4 6 4" stroke={color} stroke-width="2" fill="none" /><rect x="26" y="25" width="7" height="7" fill="#fff" stroke={color} />
                        {/if}
                    </svg>
                </button>
            {/each}
            <button aria-label="GIMP"><svg viewBox="0 0 48 48"><path d="M9 6q5 4 13 4Q33 10 39 3q3 15-4 23-8 9-20 5Q6 25 9 6z" fill="#6b6558" /><circle cx="4" cy="20" r="5" fill="#222" /><circle cx="3" cy="18" r="2" fill="#fff" /><circle cx="13" cy="17" r="4" fill="#fff" /><circle cx="22" cy="17" r="5" fill="#fff" /><circle cx="14" cy="17" r="2" /><circle cx="22" cy="17" r="2" /><path d="M26 25l12 8" stroke="#e8972e" stroke-width="3" /><path d="M36 30l12 13q-9-2-13-9z" fill="#111" stroke="#777" /></svg></button>
            <button aria-label="Files"><svg viewBox="0 0 48 48"><path d="M0 14V6q0-4 4-4h13l5 4h22q4 0 4 4v10H0z" fill="#e05a2b" /><path d="M0 14V6q0-4 4-4h13l5 4v8z" fill="#83294f" /><rect y="11" width="48" height="34" rx="4" fill="#a0a0a0" /><rect x="17" y="19" width="14" height="3" rx="1" fill="#fff" /></svg></button>
            <button aria-label="Terminal"><svg viewBox="0 0 48 48"><rect y="5" width="48" height="38" rx="4" fill="#4b4b4b" stroke="#6b6b6b" /><path d="M7 11l6 4-6 4M15 21h8" fill="none" stroke="#fff" stroke-width="2" /></svg></button>
            <button aria-label="App Center"><svg viewBox="0 0 48 48"><rect y="5" width="48" height="39" rx="4" fill="#f26530" /><path d="M16 8q0-8 8-8t8 8" fill="none" stroke="#fbd9a0" stroke-width="2" /><path d="M13 37l9-24h4l9 24M11 29h26" fill="none" stroke="#fff" stroke-width="4" stroke-linecap="round" /></svg></button>
            <button aria-label="Help"><svg viewBox="0 0 48 48"><circle cx="24" cy="24" r="24" fill="#2389d8" /><path d="M0 26h48a24 24 0 0 1-48 0z" fill="#42a2e4" /><path d="M18 13q13-4 13 4 0 4-4 7-3 3-3 6" fill="none" stroke="#fff" stroke-width="3" /><circle cx="24" cy="36" r="2.500" fill="#fff" /></svg></button>
            <hr />
            <button aria-label="Trash"><svg viewBox="0 0 48 48"><rect x="4" y="0" width="40" height="48" rx="4" fill="#cfcfcf" /><rect x="8" y="3" width="32" height="7" rx="3" fill="#777" /><path d="M19 26l5-5 5 5M31 29l2 6-4 4M17 29l-2 6 4 4h5" fill="none" stroke="#24801c" stroke-width="4" stroke-dasharray="9 2" /></svg></button>
            <button class="apps" aria-label="Show apps"><svg viewBox="0 0 30 30">{#each [0, 12, 24] as y}{#each [0, 12, 24] as x}<rect {x} {y} width="6" height="6" rx="1.500" fill="#f2f2f2" />{/each}{/each}</svg></button>
        </nav>

        <main class="window">
            <div class="titlebar">
                <h1>note-taking-strategies.pptx - LibreOffice Impress</h1>
                <div class="controls">
                    <button aria-label="Minimize"><svg width="10" height="10"><path d="M1 8h8" stroke="#333" stroke-width="1.400" /></svg></button>
                    <button aria-label="Restore"><svg width="10" height="10"><path d="M1.500 3.500h5v5h-5z" fill="none" stroke="#333" stroke-width="1.300" /><path d="M4 1h5v5" fill="none" stroke="#888" /></svg></button>
                    <button aria-label="Close">{@render cross()}</button>
                </div>
            </div>
            <nav class="menubar">
                {#each menus as menu}<button>{menu}</button>{/each}
                <button class="close-doc" aria-label="Close document">{@render cross()}</button>
            </nav>
            <div class="toolbars">
                {@render toolbar(standardBar, 'Standard')}
                {@render toolbar(drawingBar, 'Drawing')}
            </div>

            <div class="work">
                <section class="slides">
                    <div class="slides-head">
                        <h2>Slides</h2>
                        <button aria-label="Close pane"><svg width="12" height="12" viewBox="0 0 12 12"><circle cx="6" cy="6" r="6" fill="#e95420" /><path d="M4 4l4 4M8 4l-4 4" stroke="#fff" stroke-width="1.200" /></svg></button>
                    </div>
                    <div class="slide-list">
                        {#each slides as kind, i}
                            <button class="thumb-item" class:selected={selected === i} onclick={() => (selected = i)}>
                                <span class="num">{i + 1}</span>
                                <span class="thumb {kind}">
                                    <span class="part a">{#if i === 0}<u>Click to edit the title text format</u>{/if}</span>
                                    <span class="part b"></span>
                                    <span class="tiny"><b>&lt;date/time&gt;</b><em>&lt;footer&gt;</em><span>&lt;num<br />ber&gt;</span></span>
                                </span>
                            </button>
                        {/each}
                    </div>
                </section>
                <div class="splitter left"><i></i></div>

                <section class="editor">
                    {#each infobars as bar}
                        <div class="infobar">
                            <svg width="30" height="30" viewBox="0 0 30 30"><circle cx="15" cy="15" r="14.500" fill="#2389d8" stroke="#3c6e94" /><path d="M1 15h28a14 14 0 0 1-28 0z" fill="#42a2e4" /><circle cx="15" cy="7" r="2" fill="#fff" /><path d="M15 11v13" stroke="#fff" stroke-width="3" /></svg>
                            <span>{bar.text}</span>
                            <button class="action">{bar.action}</button>
                            <button class="dismiss" aria-label="Dismiss">{@render cross(18)}</button>
                        </div>
                    {/each}
                    <div class="viewport">
                        <div class="canvas">
                            <div class="page">
                                <div class="band"></div>
                                <div class="body-fill"></div>
                                <div class="focus"></div>
                                <div class="box title">{@render dashes()}<p>Click to edit the title text format</p><small>Title Area for AutoLayouts</small></div>
                                <div class="box outline">
                                    {@render dashes()}
                                    {#each levels as level, i}
                                        <p style="font-size: {level.size}px; margin: {level.gap}px 0 0 {47 + Math.round(i * 48.6) - level.slot}px; --slot: {level.slot}px; --mark: {level.markSize}px"><span>{level.mark}</span>{level.text}</p>
                                    {/each}
                                    <small>Object Area for AutoLayouts</small>
                                </div>
                                <div class="box date">{@render dashes()}<p>&lt;date/time&gt;</p><small>Date Area</small></div>
                                <div class="box footer">{@render dashes()}<p>&lt;footer&gt;</p><small>Footer Area</small></div>
                                <div class="box number">{@render dashes()}<small>Slide Number Area</small><p>&lt;num<br />ber&gt;</p></div>
                                <svg class="cursor" width="9" height="19" viewBox="0 0 9 19"><path d="M1 1.500h2.500l1 1 1-1H8M4.500 2.500v14M1 17.500h2.500l1-1 1 1H8" fill="none" stroke="#fff" stroke-width="3" /><path d="M1 1.500h2.500l1 1 1-1H8M4.500 2.500v14M1 17.500h2.500l1-1 1 1H8" fill="none" stroke="#111" /></svg>
                            </div>
                        </div>
                        <div class="vscroll"><i></i></div>
                    </div>
                    <div class="hscroll"><i></i></div>
                </section>
                <div class="splitter right"><i></i></div>

                <aside class="sidebar">
                    <div class="deck">
                        <div class="deck-head">
                            <svg width="9" height="14" viewBox="0 0 9 14"><path d="M1 1h7M1 6.500h7M1 12h7" stroke="#777" stroke-width="2.500" stroke-dasharray="2 3" /></svg>
                            <h2>Properties</h2>
                            <button aria-label="Close sidebar">{@render cross()}</button>
                        </div>
                        {@render heading('Character')}
                        <div class="panel character">
                            <div class="row fonts">
                                <div class="combo name"><select aria-label="Font name"><option>Liberation Sans</option></select>{@render chevron()}</div>
                                <div class="combo"><select aria-label="Font size"><option>44 pt</option></select>{@render chevron()}</div>
                            </div>
                            <div class="row tools">
                                {@render tool('bold')}{@render tool('italic')}{@render tool('underline', {menu: true})}{@render tool('strike')}{@render tool('shadowA')}
                                <span class="push"></span>
                                {@render tool('grow')}{@render tool('shrink')}
                            </div>
                            <div class="row tools">
                                {@render tool('fontcolor', {menu: true})}<span class="gap"></span>{@render tool('highlight', {menu: true})}<span class="gap"></span>{@render tool('clear')}
                                <span class="push"></span>
                                {@render tool('sup')}{@render tool('sub')}<span class="gap"></span>{@render tool('spacing', {menu: true})}
                            </div>
                        </div>
                        {@render heading('Lists')}
                        <div class="panel lists">
                            <div class="row tools">
                                {@render tool('bullets', {menu: true})}{@render tool('numbers', {menu: true})}
                                <span class="push"></span>
                                {@render tool('demote')}{@render tool('promote')}{@render tool('movedown')}{@render tool('moveup')}
                            </div>
                        </div>
                        {@render heading('Paragraph')}
                        <div class="panel paragraph">
                            <div class="row tools">
                                {@render tool('left')}{@render tool('center', {pressed: true})}{@render tool('right')}{@render tool('justify')}
                                <span class="push"></span>
                                {@render tool('top')}{@render tool('middle', {pressed: true})}{@render tool('bottom')}
                            </div>
                            <div class="columns">
                                <div>
                                    <h4>Spacing:</h4>
                                    <div class="row tools">{@render tool('spcup')}{@render tool('spcdown')}</div>
                                    {@render spin('sp-above', 'above', 'Above paragraph spacing')}
                                    {@render spin('sp-below', 'below', 'Below paragraph spacing')}
                                    <div class="row tools">{@render tool('linespc', {menu: true})}</div>
                                </div>
                                <div>
                                    <h4>Indent:</h4>
                                    <div class="row tools">{@render tool('indmore')}{@render tool('indless')}{@render tool('indhang')}</div>
                                    {@render spin('in-before', 'before', 'Before text indent')}
                                    {@render spin('in-after', 'after', 'After text indent')}
                                    {@render spin('in-first', 'indmore', 'First line indent')}
                                </div>
                            </div>
                        </div>
                    </div>
                    <nav class="tabs">
                        <button aria-label="Sidebar settings">{@render icon('burger')}</button>
                        {#each tabs as tab}
                            <button class:pressed={activeTab === tab} aria-label={tab} onclick={() => (activeTab = tab)}>{@render icon(tab)}</button>
                        {/each}
                    </nav>
                </aside>
            </div>

            <footer class="status">
                <span class="cell pageno">Slide 2 of 28</span>
                <span class="cell info">TextEdit: Paragraph 1, Row 1, Column 18</span>
                <span class="cell layout">Blank Slide</span>
                <span class="cell coords"><span>{@render icon('pos', 14)}1.27 / 0.76</span><span>{@render icon('size', 14)}22.86 x 3.18</span></span>
                <span class="cell saved">{@render icon('save', 14)}</span>
                <span class="cell sign"></span>
                <span class="cell lang">English (USA)</span>
                <span class="cell fit">{@render icon('fit', 14)}</span>
                <span class="cell zoom">
                    <button aria-label="Zoom out">−</button>
                    <input type="range" aria-label="Zoom" bind:value={zoom} />
                    <button aria-label="Zoom in">+</button>
                </span>
                <span class="cell percent">107%</span>
            </footer>
        </main>
    </div>
</div>

<style>
    :global(body) {
        margin: 0;
        background: #1c1016;
    }

    .desktop {
        height: 100vh;
        display: flex;
        flex-direction: column;
        overflow: hidden;
        font-family: 'Noto Sans', sans-serif;
        font-size: 14px;
        color: #3d3d3d;
    }

    h1, h2, h3, h4, p {
        margin: 0;
        font-size: inherit;
    }

    button, input, select {
        font: inherit;
        color: inherit;
        background: none;
        border: none;
        padding: 0;
        margin: 0;
        min-width: 0;
    }

    svg {
        display: block;
        flex: none;
    }

    .topbar {
        height: 27px;
        flex: none;
        display: grid;
        grid-template-columns: 1fr auto 1fr;
        align-items: center;
        padding: 0 18px;
        background: #131313;
        color: #ededed;
    }

    .top-left, .top-right, .app {
        display: flex;
        align-items: center;
    }

    .top-left {
        gap: 42px;
    }

    .app {
        gap: 7px;
    }

    .clock {
        padding-left: 70px;
    }

    .top-right {
        gap: 12px;
    }

    .bell {
        margin: 0 auto 0 18px;
    }

    .below {
        flex: 1;
        min-height: 0;
        display: flex;
    }

    .dock {
        width: 70px;
        flex: none;
        display: flex;
        flex-direction: column;
        align-items: center;
        gap: 4px;
        padding: 6px 0;
        box-sizing: border-box;
        background: linear-gradient(170deg, #190e15 60%, #28151f);
    }

    .dock button {
        width: 64px;
        height: 64px;
        flex: none;
        border-radius: 14px;
        display: grid;
        place-items: center;
        position: relative;
    }

    .dock svg {
        width: 46px;
        height: 46px;
    }

    .dock .running {
        background: #453b42;
    }

    .running::before {
        content: '';
        position: absolute;
        left: 0;
        width: 6px;
        height: 6px;
        border-radius: 50%;
        background: #e95420;
    }

    .dock hr {
        width: 48px;
        height: 1px;
        flex: none;
        border: none;
        margin: -2px 0;
        background: #c9c9c9;
    }

    .dock .apps {
        margin-top: auto;
    }

    .dock .apps svg {
        width: 30px;
        height: 30px;
    }

    .window {
        flex: 1;
        min-width: 0;
        display: flex;
        flex-direction: column;
        background: #fafafa;
    }

    .titlebar {
        height: 36px;
        flex: none;
        display: flex;
        align-items: center;
        justify-content: center;
        position: relative;
        background: #ebebeb;
        border-bottom: 1px solid #bdbdbd;
    }

    .controls {
        position: absolute;
        right: 7px;
        display: flex;
        gap: 12px;
    }

    .controls button {
        width: 22px;
        height: 22px;
        border-radius: 50%;
        display: grid;
        place-items: center;
        background: #dadada;
    }

    .menubar {
        height: 24px;
        flex: none;
        display: flex;
        gap: 17px;
        padding: 0 11px 0 9px;
        border-bottom: 1px solid #dedede;
    }

    .close-doc {
        margin-left: auto;
    }

    .toolbars {
        display: grid;
        gap: 5px;
        padding: 2px 3px 3px;
    }

    .toolbar {
        height: 34px;
        display: flex;
    }

    .tool, .side-tool {
        display: grid;
        place-items: center;
        flex: none;
        border-radius: 6px;
        box-sizing: border-box;
    }

    .tool {
        width: 33px;
    }

    .tool.wide {
        width: 42px;
    }

    .pressed {
        background: #d6d6d6;
        border: 1px solid #c4c4c4;
    }

    .caret {
        width: 11px;
        display: grid;
        place-items: center;
    }

    .caret::after {
        content: '';
        border: 3px solid transparent;
        border-top: 4px solid #111;
        border-bottom: 0;
    }

    .caret.off::after {
        border-top-color: #bdbdbd;
    }

    .sep {
        width: 1px;
        margin: 0 3px 0 4px;
        background: #dcdcdc;
    }

    .sep.blank {
        background: none;
    }

    .work {
        flex: 1;
        min-height: 0;
        display: flex;
    }

    .slides {
        width: 190px;
        flex: none;
        display: flex;
        flex-direction: column;
        padding: 0 0 5px 2px;
        box-sizing: border-box;
    }

    .slides-head {
        height: 36px;
        display: flex;
        align-items: center;
        justify-content: space-between;
        padding: 0 2px 0 1px;
    }

    .slides-head h2 {
        font-size: 15px;
    }

    .slide-list {
        flex: 1;
        display: flex;
        flex-direction: column;
        gap: 10px;
        padding: 8px;
        background: #fff;
        border: solid #bbb;
        border-width: 1px 0 0 1px;
    }

    .thumb-item {
        height: 115px;
        display: flex;
        gap: 5px;
        padding: 3px 3px 3px 10px;
        border: 1px solid transparent;
        text-align: left;
        box-sizing: border-box;
        width: 170px;
    }

    .thumb-item.selected {
        background: linear-gradient(#cf9f90, #e0b2a4);
        border-color: #a0695a;
    }

    .num {
        width: 9px;
        line-height: 16px;
        font-weight: 700;
        color: #808080;
    }

    .selected .num {
        color: #4d4d4d;
    }

    .thumb {
        width: 141px;
        flex: none;
        height: 107px;
        box-sizing: border-box;
        border: 1px solid #666;
        border-radius: 1px;
        box-shadow: 0 1px 3px #8886;
        background: #fff;
        padding: 2px 3px 3px;
        display: grid;
        gap: 2px;
        position: relative;
    }

    .thumb.title {
        grid-template-columns: 101px 1fr;
    }

    .thumb.content {
        grid-template-rows: 21px 1fr;
    }

    .part {
        font-family: 'Liberation Sans', sans-serif;
        font-size: 3px;
        line-height: 4px;
        color: #000;
        background: #544a49;
    }

    .part u {
        display: block;
        padding: 9px 5px;
    }

    .title .b, .alt .a {
        background: #c5694f;
    }

    .content .b {
        background: #ccd1b9;
    }

    .alt .b {
        background: #544a49;
    }

    .tiny {
        position: absolute;
        left: 8px;
        right: 7px;
        bottom: 3px;
        display: flex;
        justify-content: space-between;
        align-items: center;
        font: 3px/3px 'Liberation Serif', serif;
        color: #000;
    }

    .splitter {
        flex: none;
        position: relative;
        display: flex;
        align-items: center;
    }

    .splitter.left {
        width: 12px;
    }

    .splitter.left::before, .splitter.right::before {
        content: '';
        position: absolute;
        top: 0;
        bottom: 0;
        left: 5px;
        width: 1px;
        background: #bbb;
    }

    .splitter.right {
        width: 8px;
    }

    .splitter.right::before {
        left: 0;
    }

    .splitter i {
        width: 7px;
        height: 73px;
        margin-left: 4px;
        background: #999;
        z-index: 1;
        display: grid;
        place-items: center;
    }

    .splitter.right i {
        margin-left: 0;
    }

    .splitter i::after {
        content: '';
        border: 4px solid transparent;
        border-left: 0;
        border-right: 5px solid #fff;
    }

    .splitter.right i::after {
        transform: scaleX(-1);
    }

    .editor {
        flex: 1;
        min-width: 0;
        display: flex;
        flex-direction: column;
    }

    .infobar {
        height: 40px;
        box-sizing: border-box;
        flex: none;
        display: flex;
        align-items: center;
        gap: 7px;
        padding: 0 4px;
        background: #bde5f8;
        border: 1px solid #c4c4c4;
        color: #111;
    }

    .infobar .action {
        height: 34px;
        margin-left: auto;
        padding: 0 16px;
        background: #fff;
        border: 1px solid #ccc;
        border-radius: 6px;
        color: #3d3d3d;
    }

    .dismiss {
        color: #04508c;
    }

    .viewport {
        flex: 1;
        min-height: 0;
        display: flex;
    }

    .canvas {
        flex: 1;
        min-width: 0;
        overflow: hidden;
        background: #b9b9b9;
        padding: 11px 45px;
    }

    .page {
        width: 1027px;
        height: 770px;
        position: relative;
        background: #fff;
        border: 1px solid #666;
        box-shadow: 0 0 0 1px #888;
    }

    .band, .body-fill, .focus, .box {
        position: absolute;
        box-sizing: border-box;
    }

    .band {
        left: 16px;
        top: 17px;
        width: 990px;
        height: 151px;
        background: #544a49;
    }

    .body-fill {
        left: 16px;
        top: 184px;
        width: 992px;
        height: 566px;
        background: #ccd1b9;
    }

    .focus {
        left: 44px;
        top: 25px;
        width: 937px;
        height: 140px;
        border: 6px solid #7a4c42;
    }

    .dashes {
        position: absolute;
        inset: 0;
        width: 100%;
        height: 100%;
    }

    .box p {
        position: relative;
        line-height: 1;
        color: #000;
        white-space: nowrap;
        font-family: 'Liberation Sans', sans-serif;
    }

    .box small {
        position: absolute;
        right: 8px;
        bottom: 2px;
        font: 20px/24px 'DejaVu Sans', sans-serif;
        color: #c0c0c0;
        white-space: nowrap;
    }

    .title.box {
        left: 51px;
        top: 31px;
        width: 924px;
        height: 129px;
        display: grid;
        place-items: center;
    }

    .title.box p {
        font-size: 63px;
    }

    .outline {
        left: 51px;
        top: 181px;
        width: 924px;
        height: 447px;
        padding-top: 2px;
    }

    .outline p {
        display: flex;
        line-height: 115%;
    }

    .outline p:first-of-type {
        line-height: 100%;
    }

    .outline p span {
        width: var(--slot);
        font-size: var(--mark);
        text-align: center;
        align-self: center;
        line-height: 1;
    }

    .date, .footer, .number {
        top: 714px;
        height: 32px;
    }

    .date {
        left: 41px;
        width: 241px;
    }

    .footer {
        left: 342px;
        width: 377px;
        text-align: center;
    }

    .number {
        left: 924px;
        width: 67px;
    }

    .date p, .footer p {
        font: 20px/32px 'Liberation Serif', serif;
        padding: 0 10px;
    }

    .footer p {
        font-style: italic;
    }

    .number p {
        font-size: 17px;
        line-height: 16px;
        padding: 7px 9px;
        color: #544a49;
    }

    .cursor {
        position: absolute;
        left: 523px;
        top: 98px;
    }

    .vscroll {
        width: 12px;
        display: grid;
        grid-template-rows: 197fr 409fr 194fr;
        justify-items: center;
    }

    .vscroll i {
        grid-row: 2;
        width: 6px;
        border-radius: 3px;
        background: #888;
    }

    .hscroll {
        height: 12px;
        display: grid;
        grid-template-columns: 363fr 402fr 372fr;
        align-items: center;
    }

    .hscroll i {
        grid-column: 2;
        height: 6px;
        border-radius: 3px;
        background: #888;
    }

    .sidebar {
        width: 503px;
        flex: none;
        display: flex;
        justify-content: space-between;
    }

    .deck {
        width: 453px;
    }

    .deck-head {
        height: 26px;
        display: flex;
        align-items: center;
        gap: 7px;
        padding: 1px 6px 0 1px;
        box-sizing: border-box;
    }

    .deck-head button {
        margin-left: auto;
    }

    h3 {
        height: 18px;
        display: flex;
        align-items: center;
        gap: 3px;
        padding: 0 2px;
        background: #ebebeb;
    }

    h3 span {
        flex: 1;
    }

    .panel {
        padding: 10px 10px 0;
        box-sizing: border-box;
    }

    .character {
        height: 145px;
    }

    .lists {
        height: 55px;
    }

    .row {
        display: flex;
    }

    .fonts {
        gap: 14px;
        margin-bottom: 11px;
    }

    .combo {
        width: 101px;
        height: 34px;
        position: relative;
        display: flex;
        align-items: center;
        box-sizing: border-box;
        border: 1px solid #c4c4c4;
        border-radius: 6px;
        background: linear-gradient(#c4c4c4, #c4c4c4) right 34px top / 1px 100% no-repeat #fff;
    }

    .combo.name {
        flex: 1;
    }

    .combo select {
        appearance: none;
        width: 100%;
        height: 100%;
        padding-left: 8px;
        color: #111;
    }

    .combo svg {
        position: absolute;
        right: 11px;
        pointer-events: none;
    }

    .tools {
        height: 34px;
        gap: 1px;
    }

    .fonts + .tools {
        margin-bottom: 11px;
    }

    .side-tool {
        width: 36px;
    }

    .side-caret {
        width: 17px;
        display: grid;
        place-items: center;
    }

    .gap {
        width: 12px;
    }

    .push {
        flex: 1;
    }

    .columns {
        display: grid;
        grid-template-columns: minmax(0, 1fr) minmax(0, 1fr);
        gap: 5px;
        margin: 9px -4px 0;
        padding-top: 4px;
        border-top: 1px solid #dedede;
    }

    h4 {
        font-weight: 400;
        line-height: 18px;
    }

    .columns .tools {
        margin: 6px 4px;
    }

    .field {
        display: flex;
        align-items: center;
        margin-bottom: 3px;
    }

    .field label {
        width: 31px;
        flex: none;
        padding-left: 2px;
        box-sizing: border-box;
    }

    .spin {
        flex: 1;
        min-width: 0;
        height: 42px;
        display: flex;
        box-sizing: border-box;
        background: #fff;
        border: 1px solid #c4c4c4;
        border-radius: 6px;
    }

    .spin input {
        flex: 1;
        padding-left: 8px;
        color: #111;
    }

    .spin button {
        width: 35px;
        flex: none;
        display: grid;
        place-items: center;
        border-left: 1px solid #e6e6e6;
    }

    .tabs {
        width: 46px;
        display: flex;
        flex-direction: column;
        gap: 8px;
        padding-top: 4px;
    }

    .tabs button {
        width: 36px;
        height: 34px;
        display: grid;
        place-items: center;
        border-radius: 6px;
        box-sizing: border-box;
    }

    .status {
        height: 20px;
        flex: none;
        display: flex;
        border-top: 1px solid #bbb;
        font-size: 13px;
    }

    .cell {
        display: flex;
        align-items: center;
        padding-left: 8px;
        box-sizing: border-box;
        border-left: 1px solid #dcdcdc;
        white-space: nowrap;
    }

    .pageno {
        width: 100px;
        border: none;
    }

    .info {
        width: 523px;
    }

    .layout {
        width: 376px;
    }

    .coords {
        width: 216px;
        gap: 22px;
        padding-left: 10px;
    }

    .coords span {
        display: flex;
        align-items: center;
        gap: 4px;
    }

    .saved {
        width: 22px;
        padding-left: 4px;
    }

    .sign {
        width: 29px;
    }

    .lang {
        flex: 1;
        justify-content: center;
        padding: 0;
    }

    .fit {
        width: 22px;
        padding-left: 4px;
    }

    .zoom {
        width: 143px;
        gap: 6px;
        padding: 0 6px 0 8px;
    }

    .zoom button {
        font-size: 16px;
        font-weight: 700;
        line-height: 16px;
    }

    .zoom input {
        flex: 1;
        height: 12px;
        appearance: none;
        background: linear-gradient(#aaa, #aaa) center / 100% 2px no-repeat;
    }

    .zoom input::-webkit-slider-thumb {
        appearance: none;
        width: 8px;
        height: 8px;
        border: 1px solid #555;
        border-radius: 50%;
        background: #fafafa;
    }

    .percent {
        width: 49px;
    }
</style>
